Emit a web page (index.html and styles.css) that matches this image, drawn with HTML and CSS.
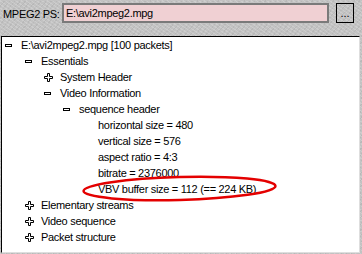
FILE: index.html
```html
<!DOCTYPE html>
<html lang="en">
<head>
  <meta charset="UTF-8">
  <title>MPEG2 PS</title>
  <link rel="stylesheet" href="styles.css">
</head>
<body>
  <div class="window">
    <div class="toolbar">
      <span class="fieldLabel">MPEG2 PS:</span>
      <div class="pathInput">E:\avi2mpeg2.mpg</div>
      <button class="browseBtn">...</button>
    </div>

    <div class="tree">
      <ul class="level">
        <li>
          <div class="row"><span class="toggle minus"></span>E:\avi2mpeg2.mpg [100 packets]</div>
          <ul class="level first">
            <li>
              <div class="row"><span class="toggle minus"></span>Essentials</div>
              <ul class="level">
                <li><div class="row"><span class="toggle plus"></span>System Header</div></li>
                <li>
                  <div class="row"><span class="toggle minus"></span>Video Information</div>
                  <ul class="level">
                    <li>
                      <div class="row"><span class="toggle minus"></span>sequence header</div>
                      <ul class="level">
                        <li><div class="row"><span class="toggle"></span>horizontal size = 480</div></li>
                        <li><div class="row"><span class="toggle"></span>vertical size = 576</div></li>
                        <li><div class="row"><span class="toggle"></span>aspect ratio = 4:3</div></li>
                        <li><div class="row"><span class="toggle"></span>bitrate = 2376000</div></li>
                        <li><div class="row"><span class="toggle"></span>VBV buffer size = 112 (== 224 KB)</div></li>
                      </ul>
                    </li>
                  </ul>
                </li>
              </ul>
            </li>
            <li><div class="row"><span class="toggle plus"></span>Elementary streams</div></li>
            <li><div class="row"><span class="toggle plus"></span>Video sequence</div></li>
            <li><div class="row"><span class="toggle plus"></span>Packet structure</div></li>
          </ul>
        </li>
      </ul>
    </div>

    <!-- hand drawn highlight round the VBV line -->
    <svg class="mark" width="362" height="254" viewBox="0 0 362 254">
      <ellipse cx="179.5" cy="188.5" rx="96" ry="11.5" transform="rotate(-1.5 179.5 188.5)" fill="none" stroke="#e40000" stroke-width="2.5"/>
    </svg>
  </div>
</body>
</html>
```

FILE: styles.css
```css
body { margin: 0; background-color: #c2c2c2; font-family: "Liberation Sans", Arial, sans-serif; font-size: 11px; letter-spacing: -0.3px; color: #000; }
.window { position: relative; width: 362px; height: 254px; overflow: hidden;
          background-color: #c2c2c2;
          background-image: repeating-linear-gradient(35deg, rgba(255,255,255,.18) 0 1px, transparent 1px 3px),
                            repeating-linear-gradient(-50deg, rgba(0,0,0,.05) 0 1px, transparent 1px 4px); }

.toolbar { display: flex; align-items: center; height: 36px; padding: 3px 0 0 3px; box-sizing: border-box; align-items: flex-start; }
.fieldLabel { width: 59px; line-height: 20px; padding-top: 1px; }
.pathInput { width: 261px; height: 16px; line-height: 16px; padding-left: 2px; border: 2px solid #7a7a7a; background-color: #f0d0d3; }
.browseBtn { margin-left: 7px; width: 18px; height: 20px; padding: 0; border: 1px solid #000; background: none; font: inherit; line-height: 14px; }

.tree { margin-left: 1px; width: 359px; height: 217px; box-sizing: border-box; background-color: #fff;
        border-top: 1px solid #000; border-left: 1px solid #000; border-right: 1px solid #dedede; border-bottom: 1px solid #dedede; }
.level { list-style: none; margin: 0; padding: 0 0 0 19px; }
.tree > .level { padding-left: 3px; }
.level.first { padding-left: 20px; }
.row { display: flex; align-items: center; height: 16px; white-space: nowrap; }

.toggle { flex: none; width: 16px; height: 9px; background-repeat: no-repeat; background-position: 0 center; }
.minus { background-image: url("data:image/svg+xml,%3Csvg xmlns='http://www.w3.org/2000/svg' width='7' height='3'%3E%3Crect x='.5' y='.5' width='6' height='2' fill='%23fff' stroke='%23000'/%3E%3C/svg%3E"); }
.plus { background-image: url("data:image/svg+xml,%3Csvg xmlns='http://www.w3.org/2000/svg' width='9' height='9'%3E%3Cpolygon points='3.5,.5 5.5,.5 5.5,3.5 8.5,3.5 8.5,5.5 5.5,5.5 5.5,8.5 3.5,8.5 3.5,5.5 .5,5.5 .5,3.5 3.5,3.5' fill='%23fff' stroke='%23000'/%3E%3C/svg%3E"); }

.mark { position: absolute; left: 0; top: 0; pointer-events: none; }
```
